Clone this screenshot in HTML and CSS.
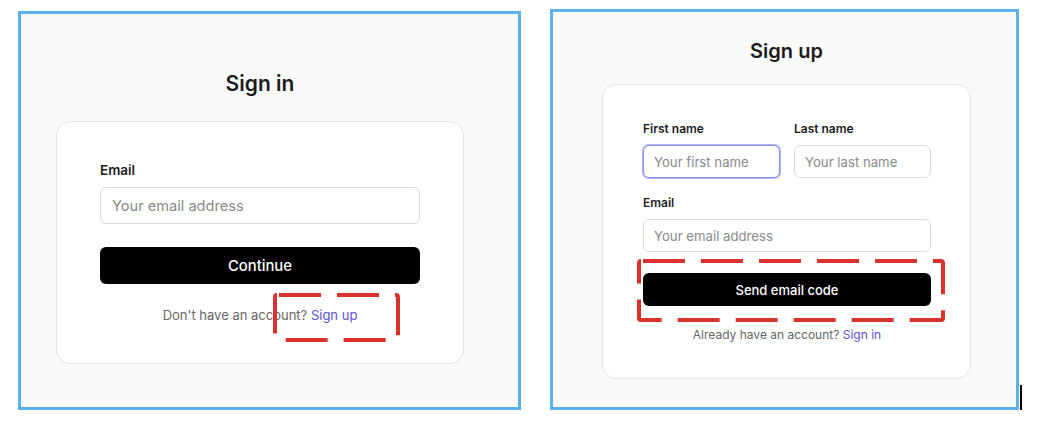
FILE: index.html
```html
<!DOCTYPE html>
<html lang="en">

<head>
    <meta charset="UTF-8">
    <meta name="viewport" content="width=device-width, initial-scale=1.0">
    <title>Sign in / Sign up</title>
    <link rel="stylesheet" href="styles.css">
</head>

<body>
    <div class="page">
        <!-- Sign in -->
        <section class="panel panel-signin">
            <h2 class="title">Sign in</h2>
            <div class="card card-signin">
                <label class="label" for="signin-email">Email</label>
                <input class="input" type="email" id="signin-email" placeholder="Your email address">
                <button class="btn">Continue</button>
                <p class="switch">Don't have an account? <a href="#">Sign up</a></p>
                <svg class="mark mark-signin" width="127" height="49" viewBox="0 0 127 49">
                    <rect x="2" y="2" width="123" height="45" rx="2" fill="none" stroke="#d8322a" stroke-width="4" stroke-dasharray="42 16" stroke-dashoffset="-2"/>
                </svg>
            </div>
        </section>

        <!-- Sign up -->
        <section class="panel panel-signup">
            <h2 class="title">Sign up</h2>
            <div class="card card-signup">
                <div class="name-row">
                    <div class="field">
                        <label class="label" for="first-name">First name</label>
                        <input class="input input-focus" type="text" id="first-name" placeholder="Your first name">
                    </div>
                    <div class="field">
                        <label class="label" for="last-name">Last name</label>
                        <input class="input" type="text" id="last-name" placeholder="Your last name">
                    </div>
                </div>
                <div class="field field-email">
                    <label class="label" for="signup-email">Email</label>
                    <input class="input" type="email" id="signup-email" placeholder="Your email address">
                </div>
                <button class="btn">Send email code</button>
                <p class="switch">Already have an account? <a href="#">Sign in</a></p>
                <svg class="mark mark-signup" width="308" height="63" viewBox="0 0 308 63">
                    <rect x="2" y="2" width="304" height="59" rx="2" fill="none" stroke="#d8322a" stroke-width="4" stroke-dasharray="42 16" stroke-dashoffset="-2"/>
                </svg>
            </div>
        </section>

        <span class="caret"></span>
    </div>
</body>

</html>
```

FILE: styles.css
```css
body {
    margin: 0;
    font-family: Inter, "Noto Sans", Arial, sans-serif;
    background-color: #fff;
    color: #1a1a1a;
}

.page {
    display: flex;
    align-items: flex-end;
    gap: 29px;
    padding: 9px 0 0 18px;
}

.panel {
    box-sizing: border-box;
    border: 3px solid #5cb2ec;
    background-color: #fafafa;
    display: flex;
    flex-direction: column;
}

.panel-signin {
    width: 503px;
    height: 399px;
    padding: 56px 54px 0 35px;
}

.panel-signup {
    width: 469px;
    height: 401px;
    padding: 25px 45px 0 49px;
}

.title {
    margin: 0;
    text-align: center;
    font-size: 21px;
    line-height: 28px;
    font-weight: 600;
    color: #1c1c1c;
}

.panel-signin .title {
    margin-bottom: 23px;
}

.panel-signup .title {
    font-size: 20px;
    margin-bottom: 19px;
}

.card {
    position: relative;
    box-sizing: border-box;
    background-color: #fff;
    border: 1px solid #e3e3e3;
    border-radius: 14px;
    display: flex;
    flex-direction: column;
}

.card-signin {
    height: 243px;
    padding: 38px 43px 0 43px;
}

.card-signup {
    height: 295px;
    padding: 35px 39px 0 40px;
}

.label {
    display: block;
    font-size: 13.5px;
    line-height: 20px;
    font-weight: 600;
    color: #1c1c1c;
    margin-bottom: 7px;
}

.card-signup .label {
    font-size: 12px;
    line-height: 18px;
}

.input {
    box-sizing: border-box;
    width: 100%;
    height: 37px;
    padding: 0 11px;
    font-family: inherit;
    font-size: 14.6px;
    border: 1px solid #dcdcdc;
    border-radius: 6px;
    background-color: #fff;
    outline: none;
}

.card-signup .input {
    height: 33px;
    font-size: 13.2px;
    padding: 0 10px;
}

.input::placeholder {
    color: #8a8a8a;
}

.input-focus {
    border-color: #8c8ff2;
    box-shadow: 0 0 0 1px #b3b5f6;
}

.btn {
    height: 37px;
    margin-top: 23px;
    border: none;
    border-radius: 6px;
    background-color: #000;
    color: #fff;
    font-family: inherit;
    font-size: 14.8px;
    font-weight: 500;
    cursor: pointer;
}

.card-signup .btn {
    height: 33px;
    margin-top: 21px;
    font-size: 13px;
}

.switch {
    margin: 21px 0 0;
    text-align: center;
    font-size: 13px;
    line-height: 20px;
    color: #666;
}

.card-signup .switch {
    margin-top: 20px;
    font-size: 12px;
    line-height: 18px;
}

.switch a {
    color: #5b52d6;
    text-decoration: none;
}

.name-row {
    display: grid;
    grid-template-columns: 1fr 1fr;
    gap: 14px;
}

.field-email {
    margin-top: 16px;
}

/* dashed annotation boxes on top of the cards */
.mark {
    position: absolute;
    pointer-events: none;
}

.mark-signin {
    left: 216px;
    top: 171px;
}

.mark-signup {
    left: 34px;
    top: 174px;
}

.caret {
    width: 2px;
    height: 25px;
    background-color: #000;
    margin-left: -28px;
}
```
